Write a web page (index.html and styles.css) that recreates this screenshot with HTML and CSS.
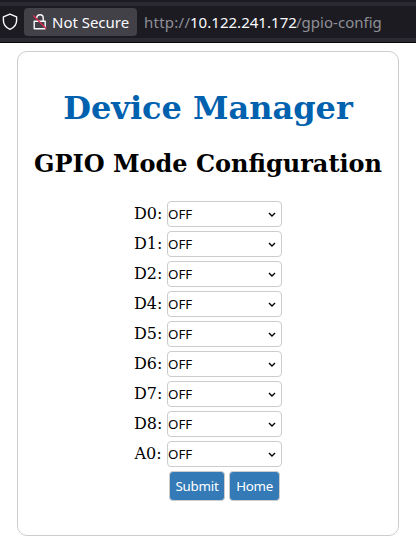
FILE: index.html
```html
<!DOCTYPE html>
<html lang="en">
<head>
<meta charset="utf-8">
<title>Device Manager</title>
<link rel="stylesheet" href="styles.css">
</head>
<body>
<header class="toolbar">
  <div class="address">
    <svg class="shield" width="18" height="18" viewBox="0 0 18 18"><path d="M9 1.2L15.6 3.8V7.5C15.6 11.5 13 14.6 9 16.4C5 14.6 2.4 11.5 2.4 7.5V3.8Z"/></svg>
    <div class="security">
      <svg class="lock" width="16" height="18" viewBox="0 0 16 18"><path d="M2.2 8.2H13.2V15.8H2.2ZM4.7 5.2C5 0.6 11.2 0.6 11.2 5.2V8"/><path class="slash" d="M1.3 2.5L14.3 15.7"/></svg>
      <span class="status">Not Secure</span>
    </div>
    <div class="url"><span class="scheme">http://</span><span class="host">10.122.241.172</span><span class="path">/gpio-config</span></div>
  </div>
</header>
<main class="card">
  <h1>Device Manager</h1>
  <h2>GPIO Mode Configuration</h2>
  <form>
    <div class="row"><label for="d0">D0:</label><div class="field"><select id="d0"><option>OFF</option></select><svg width="8" height="6"><path d="M1 1L4 4L7 1"/></svg></div></div>
    <div class="row"><label for="d1">D1:</label><div class="field"><select id="d1"><option>OFF</option></select><svg width="8" height="6"><path d="M1 1L4 4L7 1"/></svg></div></div>
    <div class="row"><label for="d2">D2:</label><div class="field"><select id="d2"><option>OFF</option></select><svg width="8" height="6"><path d="M1 1L4 4L7 1"/></svg></div></div>
    <div class="row"><label for="d4">D4:</label><div class="field"><select id="d4"><option>OFF</option></select><svg width="8" height="6"><path d="M1 1L4 4L7 1"/></svg></div></div>
    <div class="row"><label for="d5">D5:</label><div class="field"><select id="d5"><option>OFF</option></select><svg width="8" height="6"><path d="M1 1L4 4L7 1"/></svg></div></div>
    <div class="row"><label for="d6">D6:</label><div class="field"><select id="d6"><option>OFF</option></select><svg width="8" height="6"><path d="M1 1L4 4L7 1"/></svg></div></div>
    <div class="row"><label for="d7">D7:</label><div class="field"><select id="d7"><option>OFF</option></select><svg width="8" height="6"><path d="M1 1L4 4L7 1"/></svg></div></div>
    <div class="row"><label for="d8">D8:</label><div class="field"><select id="d8"><option>OFF</option></select><svg width="8" height="6"><path d="M1 1L4 4L7 1"/></svg></div></div>
    <div class="row"><label for="a0">A0:</label><div class="field"><select id="a0"><option>OFF</option></select><svg width="8" height="6"><path d="M1 1L4 4L7 1"/></svg></div></div>
    <div class="actions"><button class="submit" type="button">Submit</button><button class="home" type="button">Home</button></div>
  </form>
</main>
</body>
</html>
```
FILE: styles.css
```css
* { box-sizing: border-box; }
body {
  margin: 0;
  background: #fff;
  color: #000;
  font-family: "DejaVu Serif", serif;
  font-size: 16px;
  overflow: hidden;
}
.toolbar {
  height: 43px;
  padding: 6px 0 4px;
  background: #2b2a33;
  border-bottom: 1px solid #08080c;
  box-shadow: inset 0 2px #1c1b22;
}
.address {
  display: flex;
  align-items: center;
  height: 32px;
  padding-left: 1px;
  background: #1c1b22;
  font-family: "Noto Sans", sans-serif;
  font-size: 15px;
  color: #fbfbfe;
  white-space: nowrap;
}
svg { fill: none; }
.shield { stroke: #fbfbfe; stroke-width: 1.4; stroke-linejoin: round; }
.security {
  display: flex;
  align-items: center;
  width: 113px;
  height: 28px;
  margin-left: 5px;
  padding-left: 8px;
  border-radius: 4px;
  background: #424147;
}
.lock { stroke: #fbfbfe; stroke-width: 1.4; stroke-linejoin: round; }
.lock .slash { stroke: #e22850; stroke-width: 1.3; }
.status { margin-left: 4px; letter-spacing: -0.02px; }
.url { display: flex; margin-left: 7px; }
.scheme, .path { color: #8f8f96; }
.scheme { width: 46px; letter-spacing: 0.25px; }
.host { width: 106px; letter-spacing: 0.03px; }
.path { letter-spacing: 0.02px; }
.card {
  width: 382px;
  height: 485px;
  margin: 8px 0 0 17px;
  border: 1px solid #ccc;
  border-radius: 10px;
  text-align: center;
}
h1 {
  margin: 37px 0 0;
  color: #0061af;
  font-size: 32px;
  line-height: 38px;
  white-space: nowrap;
}
h2 {
  margin: 23px 0 0;
  font-size: 24px;
  line-height: 28px;
  white-space: nowrap;
}
form { margin-top: 23px; }
.row {
  display: flex;
  justify-content: center;
  align-items: center;
  gap: 5px;
  height: 26px;
  margin-bottom: 4px;
}
label { width: 28px; line-height: 22px; text-align: center; white-space: nowrap; }
.field { position: relative; width: 115px; height: 26px; }
select {
  appearance: none;
  display: block;
  width: 100%;
  height: 100%;
  padding: 0;
  border: 1px solid #ccc;
  border-radius: 4px;
  background: #fff;
  color: #000;
  font: 13.333px "Noto Sans", sans-serif;
}
.field svg {
  position: absolute;
  right: 6px;
  top: 11px;
  stroke: #000;
  stroke-width: 1.4;
}
.actions { display: flex; gap: 4px; margin-left: 151px; }
button {
  height: 30px;
  padding: 0;
  border: 1px solid #ccc;
  border-radius: 4px;
  background: #337ab7;
  color: #fff;
  font: 13.333px "Noto Sans", sans-serif;
}
.submit { width: 56px; letter-spacing: -0.25px; }
.home { width: 51px; letter-spacing: -0.3px; }
```
